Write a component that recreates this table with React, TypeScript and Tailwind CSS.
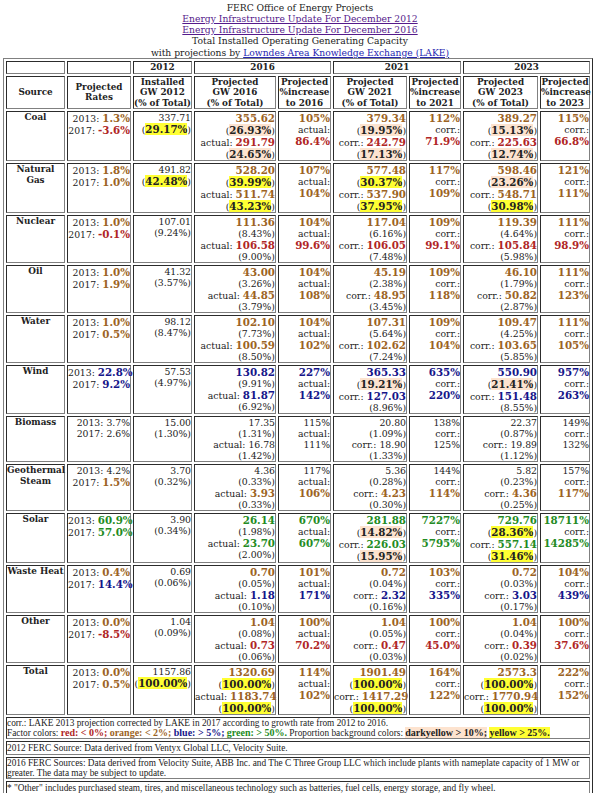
import React from "react";

type Tone = "o" | "r" | "b" | "g" | "";
type Hl = "y" | "d" | "";
// [val, pct, hl, val2, pct2, hl2, inc, inc2]
type Proj = [string, string, Hl, string, string, Hl, string, string];

type Row = {
  name: string[];
  t1: Tone;
  t2: Tone;
  r13: string;
  r17: string;
  base: [string, string, Hl];
  p16: Proj;
  p21: Proj;
  p23: Proj;
};

const rows: Row[] = [
  {
    name: ["Coal"], t1: "o", t2: "r", r13: "1.3%", r17: "-3.6%",
    base: ["337.71", "29.17%", "y"],
    p16: ["355.62", "26.93%", "d", "291.79", "24.65%", "d", "105%", "86.4%"],
    p21: ["379.34", "19.95%", "d", "242.79", "17.13%", "d", "112%", "71.9%"],
    p23: ["389.27", "15.13%", "d", "225.63", "12.74%", "d", "115%", "66.8%"],
  },
  {
    name: ["Natural", "Gas"], t1: "o", t2: "o", r13: "1.8%", r17: "1.0%",
    base: ["491.82", "42.48%", "y"],
    p16: ["528.20", "39.99%", "y", "511.74", "43.23%", "y", "107%", "104%"],
    p21: ["577.48", "30.37%", "y", "537.90", "37.95%", "y", "117%", "109%"],
    p23: ["598.46", "23.26%", "d", "548.71", "30.98%", "y", "121%", "111%"],
  },
  {
    name: ["Nuclear"], t1: "o", t2: "r", r13: "1.0%", r17: "-0.1%",
    base: ["107.01", "9.24%", ""],
    p16: ["111.36", "8.43%", "", "106.58", "9.00%", "", "104%", "99.6%"],
    p21: ["117.04", "6.16%", "", "106.05", "7.48%", "", "109%", "99.1%"],
    p23: ["119.39", "4.64%", "", "105.84", "5.98%", "", "111%", "98.9%"],
  },
  {
    name: ["Oil"], t1: "o", t2: "o", r13: "1.0%", r17: "1.9%",
    base: ["41.32", "3.57%", ""],
    p16: ["43.00", "3.26%", "", "44.85", "3.79%", "", "104%", "108%"],
    p21: ["45.19", "2.38%", "", "48.95", "3.45%", "", "109%", "118%"],
    p23: ["46.10", "1.79%", "", "50.82", "2.87%", "", "111%", "123%"],
  },
  {
    name: ["Water"], t1: "o", t2: "o", r13: "1.0%", r17: "0.5%",
    base: ["98.12", "8.47%", ""],
    p16: ["102.10", "7.73%", "", "100.59", "8.50%", "", "104%", "102%"],
    p21: ["107.31", "5.64%", "", "102.62", "7.24%", "", "109%", "104%"],
    p23: ["109.47", "4.25%", "", "103.65", "5.85%", "", "111%", "105%"],
  },
  {
    name: ["Wind"], t1: "b", t2: "b", r13: "22.8%", r17: "9.2%",
    base: ["57.53", "4.97%", ""],
    p16: ["130.82", "9.91%", "", "81.87", "6.92%", "", "227%", "142%"],
    p21: ["365.33", "19.21%", "d", "127.03", "8.96%", "", "635%", "220%"],
    p23: ["550.90", "21.41%", "d", "151.48", "8.55%", "", "957%", "263%"],
  },
  {
    name: ["Biomass"], t1: "", t2: "", r13: "3.7%", r17: "2.6%",
    base: ["15.00", "1.30%", ""],
    p16: ["17.35", "1.31%", "", "16.78", "1.42%", "", "115%", "111%"],
    p21: ["20.80", "1.09%", "", "18.90", "1.33%", "", "138%", "125%"],
    p23: ["22.37", "0.87%", "", "19.89", "1.12%", "", "149%", "132%"],
  },
  {
    name: ["Geothermal", "Steam"], t1: "", t2: "o", r13: "4.2%", r17: "1.5%",
    base: ["3.70", "0.32%", ""],
    p16: ["4.36", "0.33%", "", "3.93", "0.33%", "", "117%", "106%"],
    p21: ["5.36", "0.28%", "", "4.23", "0.30%", "", "144%", "114%"],
    p23: ["5.82", "0.23%", "", "4.36", "0.25%", "", "157%", "117%"],
  },
  {
    name: ["Solar"], t1: "g", t2: "g", r13: "60.9%", r17: "57.0%",
    base: ["3.90", "0.34%", ""],
    p16: ["26.14", "1.98%", "", "23.70", "2.00%", "", "670%", "607%"],
    p21: ["281.88", "14.82%", "d", "226.03", "15.95%", "d", "7227%", "5795%"],
    p23: ["729.76", "28.36%", "y", "557.14", "31.46%", "y", "18711%", "14285%"],
  },
  {
    name: ["Waste Heat"], t1: "o", t2: "b", r13: "0.4%", r17: "14.4%",
    base: ["0.69", "0.06%", ""],
    p16: ["0.70", "0.05%", "", "1.18", "0.10%", "", "101%", "171%"],
    p21: ["0.72", "0.04%", "", "2.32", "0.16%", "", "103%", "335%"],
    p23: ["0.72", "0.03%", "", "3.03", "0.17%", "", "104%", "439%"],
  },
  {
    name: ["Other"], t1: "o", t2: "r", r13: "0.0%", r17: "-8.5%",
    base: ["1.04", "0.09%", ""],
    p16: ["1.04", "0.08%", "", "0.73", "0.06%", "", "100%", "70.2%"],
    p21: ["1.04", "0.05%", "", "0.47", "0.03%", "", "100%", "45.0%"],
    p23: ["1.04", "0.04%", "", "0.39", "0.02%", "", "100%", "37.6%"],
  },
  {
    name: ["Total"], t1: "o", t2: "o", r13: "0.0%", r17: "0.5%",
    base: ["1157.86", "100.00%", "y"],
    p16: ["1320.69", "100.00%", "y", "1183.74", "100.00%", "y", "114%", "102%"],
    p21: ["1901.49", "100.00%", "y", "1417.29", "100.00%", "y", "164%", "122%"],
    p23: ["2573.3", "100.00%", "y", "1770.94", "100.00%", "y", "222%", "152%"],
  },
];

const TONE: Record<string, string> = {
  o: "text-[#9c6324]",
  r: "text-[#b02525]",
  b: "text-[#15158a]",
  g: "text-[#238b23]",
};

const HL: Record<string, string> = {
  y: "bg-[#ffff33]",
  d: "bg-[#fde3cf]",
};

const cellBorder = "border [border-style:inset] border-[#808080] p-0";

function Num({ v, t }: { v: string; t: Tone }) {
  if (!t) return <span>{v}</span>;
  return <b className={`text-[10.3px] font-bold ${TONE[t]}`}>{v}</b>;
}

function Pct({ p, hl }: { p: string; hl: Hl }) {
  if (!hl) return <span>({p})</span>;
  return (
    <span>
      (<b className={`text-[10.3px] font-bold ${HL[hl]}`}>{p}</b>)
    </span>
  );
}

function Td({ children, className = "" }: { children: React.ReactNode; className?: string }) {
  return <td className={`${cellBorder} align-top text-right whitespace-nowrap ${className}`}>{children}</td>;
}

function ProjCells({ p, label, t1, t2 }: { p: Proj; label: string; t1: Tone; t2: Tone }) {
  return (
    <>
      <Td>
        <div><Num v={p[0]} t={t1} /></div>
        <div><Pct p={p[1]} hl={p[2]} /></div>
        <div>{label} <Num v={p[3]} t={t2} /></div>
        <div><Pct p={p[4]} hl={p[5]} /></div>
      </Td>
      <Td>
        <div><Num v={p[6]} t={t1} /></div>
        <div>{label}</div>
        <div><Num v={p[7]} t={t2} /></div>
      </Td>
    </>
  );
}

function Th({ children, colSpan }: { children?: React.ReactNode; colSpan?: number }) {
  return (
    <th colSpan={colSpan} className={`${cellBorder} font-bold text-center align-middle whitespace-nowrap`}>
      {children}
    </th>
  );
}

const note = `${cellBorder} text-left font-['Liberation_Serif',serif] text-[9.3px] leading-[10px]`;

export default function App() {
  return (
    <div className="bg-white w-[600px] min-h-[793px] font-['DejaVu_Serif',serif] text-[#222] leading-[normal] overflow-hidden">
      {/* Title block */}
      <div className="text-center text-[9.2px] leading-[11.3px] pt-[1.5px]">
        <div>FERC Office of Energy Projects</div>
        <div><a href="#" className="text-[#551a8b] underline">Energy Infrastructure Update For December 2012</a></div>
        <div><a href="#" className="text-[#551a8b] underline">Energy Infrastructure Update For December 2016</a></div>
        <div>Total Installed Operating Generating Capacity</div>
        <div>
          with projections by{" "}
          <a href="#" className="text-[#2525b0] underline">Lowndes Area Knowledge Exchange (LAKE)</a>
        </div>
      </div>

      <table className="ml-[3px] w-[590px] table-fixed border-separate border-spacing-[2px] border [border-style:outset] border-[#808080] text-[9.3px] leading-[normal]">
        <colgroup>
          <col className="w-[59px]" />
          <col className="w-[64px]" />
          <col className="w-[59px]" />
          <col className="w-[82px]" />
          <col className="w-[53px]" />
          <col className="w-[74px]" />
          <col className="w-[52px]" />
          <col className="w-[75px]" />
          <col className="w-[50px]" />
        </colgroup>
        <thead className="text-[8.8px] leading-[10.6px]">
          <tr>
            <Th />
            <Th />
            <Th>2012</Th>
            <Th colSpan={2}>2016</Th>
            <Th colSpan={2}>2021</Th>
            <Th colSpan={2}>2023</Th>
          </tr>
          <tr>
            <Th>Source</Th>
            <Th>Projected<br />Rates</Th>
            <Th>Installed<br />GW 2012<br />(% of Total)</Th>
            <Th>Projected<br />GW 2016<br />(% of Total)</Th>
            <Th>Projected<br />%increase<br />to 2016</Th>
            <Th>Projected<br />GW 2021<br />(% of Total)</Th>
            <Th>Projected<br />%increase<br />to 2021</Th>
            <Th>Projected<br />GW 2023<br />(% of Total)</Th>
            <Th>Projected<br />%increase<br />to 2023</Th>
          </tr>
        </thead>
        <tbody>
          {rows.map((r) => (
            <tr key={r.name.join(" ")}>
              <td className={`${cellBorder} align-top text-center font-bold text-[8.8px] leading-[10.6px] whitespace-nowrap`}>
                {r.name.map((n) => (
                  <div key={n}>{n}</div>
                ))}
              </td>
              <Td>
                <div>2013: <Num v={r.r13} t={r.t1} /></div>
                <div>2017: <Num v={r.r17} t={r.t2} /></div>
              </Td>
              <Td>
                <div>{r.base[0]}</div>
                <div><Pct p={r.base[1]} hl={r.base[2]} /></div>
              </Td>
              <ProjCells p={r.p16} label="actual:" t1={r.t1} t2={r.t2} />
              <ProjCells p={r.p21} label="corr.:" t1={r.t1} t2={r.t2} />
              <ProjCells p={r.p23} label="corr.:" t1={r.t1} t2={r.t2} />
            </tr>
          ))}

          {/* Notes */}
          <tr>
            <td colSpan={9} className={note}>
              <div>corr.: LAKE 2013 projection corrected by LAKE in 2017 according to growth rate from 2012 to 2016.</div>
              <div className="whitespace-nowrap">
                Factor colors: <b className="text-[10px] text-[#b02525]">red: &lt; 0%;</b>{" "}
                <b className="text-[10px] text-[#9c6324]">orange: &lt; 2%;</b>{" "}
                <b className="text-[10px] text-[#15158a]">blue: &gt; 5%;</b>{" "}
                <b className="text-[10px] text-[#238b23]">green: &gt; 50%.</b> Proportion background colors:{" "}
                <b className="text-[10px] bg-[#fde3cf]">darkyellow &gt; 10%;</b>{" "}
                <b className="text-[10px] bg-[#ffff33]">yellow &gt; 25%.</b>
              </div>
            </td>
          </tr>
          <tr>
            <td colSpan={9} className={`${note} py-[1px]`}>
              2012 FERC Source: Data derived from Ventyx Global LLC, Velocity Suite.
            </td>
          </tr>
          <tr>
            <td colSpan={9} className={note}>
              <div className="whitespace-nowrap">
                2016 FERC Sources: Data derived from Velocity Suite, ABB Inc. and The C Three Group LLC which include plants with nameplate capacity of 1 MW or
              </div>
              <div>greater. The data may be subject to update.</div>
            </td>
          </tr>
          <tr>
            <td colSpan={9} className={`${note} py-[1px]`}>
              * "Other" includes purchased steam, tires, and miscellaneous technology such as batteries, fuel cells, energy storage, and fly wheel.
            </td>
          </tr>
        </tbody>
      </table>
    </div>
  );
}
